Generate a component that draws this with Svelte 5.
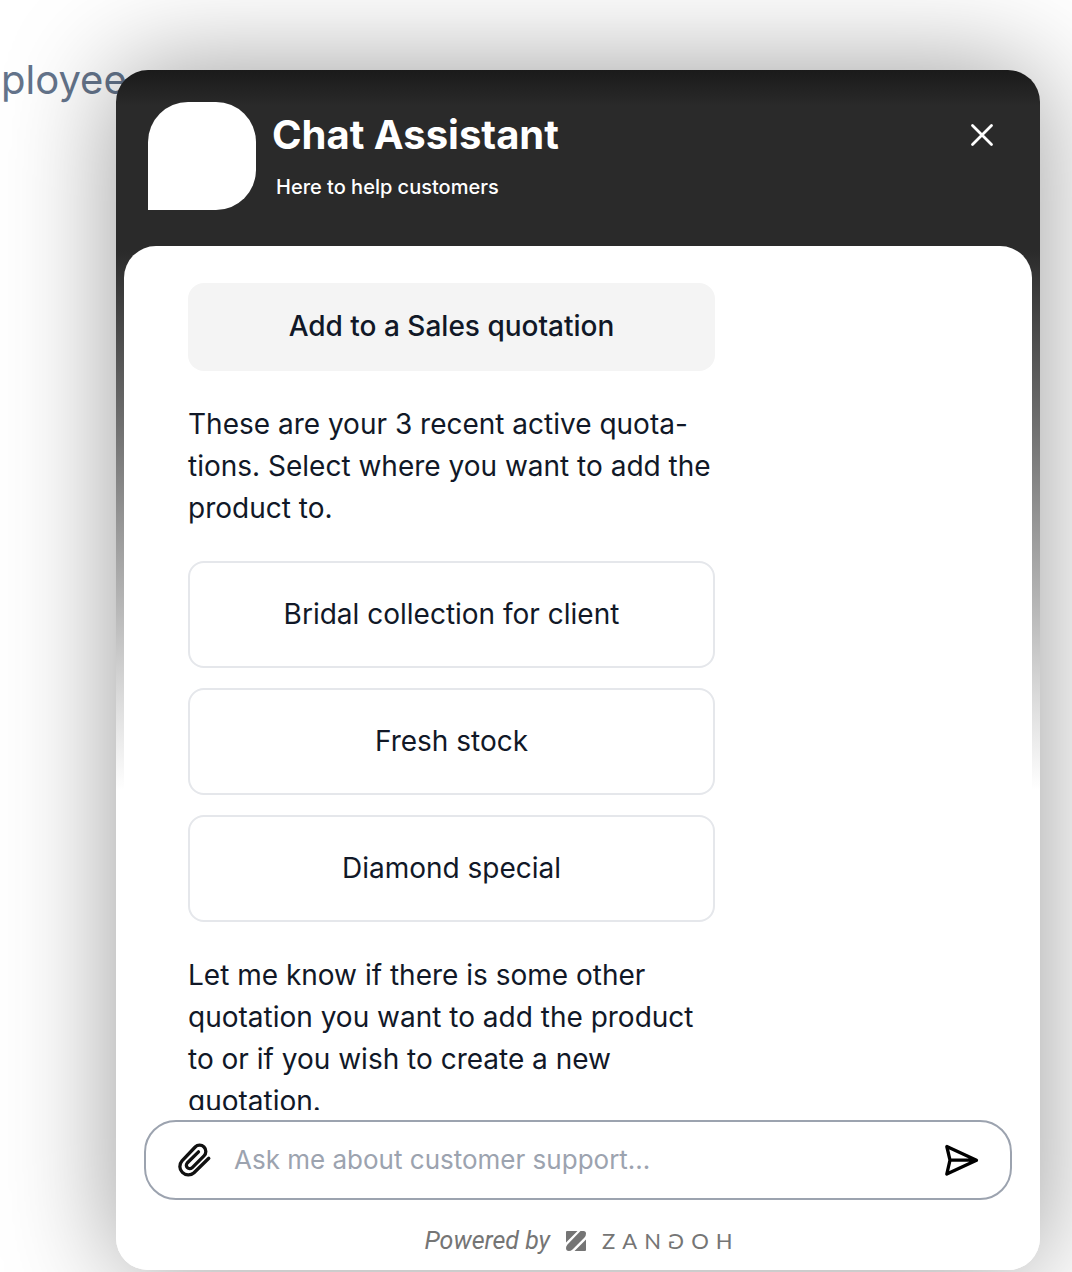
<script>
  const options = ['Bridal collection for client', 'Fresh stock', 'Diamond special'];
  let draft = $state('');
</script>

<main class="page">
  <p class="backdrop">ployee</p>

  <section class="chat" aria-label="Chat Assistant">
    <header>
      <div class="avatar"></div>
      <div class="titles">
        <h1>Chat Assistant</h1>
        <p>Here to help customers</p>
      </div>
      <button class="icon close" aria-label="Close chat">
        <svg width="24" height="24" viewBox="0 0 24 24"><path d="M2.5 2.5l19 19M21.5 2.5l-19 19" fill="none" stroke="#fff" stroke-width="2.8" stroke-linecap="round" /></svg>
      </button>
    </header>

    <div class="body">
      <div class="messages">
        <div class="column">
          <button class="chosen">Add to a Sales quotation</button>
          <p class="text">These are your 3 recent active quota-<br />tions. Select where you want to add the product to.</p>
          <div class="options">
            {#each options as option}
              <button class="option">{option}</button>
            {/each}
          </div>
          <p class="text">Let me know if there is some other quotation you want to add the product to or if you wish to create a new quotation.</p>
        </div>
      </div>

      <form class="composer" onsubmit={(e) => e.preventDefault()}>
        <button type="button" class="icon" aria-label="Attach a file">
          <svg width="36" height="36" viewBox="0 0 36 36"><path d="M32.800 16.300L18 30.800A8.500 8.500 0 0 1 6 18.800L19.200 5A6.200 6.200 0 0 1 28 13.800L16 25.800A3.400 3.400 0 0 1 11.200 21L22.500 9.800" fill="none" stroke="#111" stroke-width="3.300" stroke-linecap="round" stroke-linejoin="round" /></svg>
        </button>
        <input type="text" aria-label="Message" placeholder="Ask me about customer support..." bind:value={draft} />
        <button type="submit" class="icon" aria-label="Send message">
          <svg width="36" height="36" viewBox="0 0 36 36"><path d="M2.800 4.500L32.500 18.200L2.800 32L6 18.200ZM6 18.200H32" fill="none" stroke="#000" stroke-width="3.300" stroke-linecap="round" stroke-linejoin="round" /></svg>
        </button>
      </form>

      <footer>
        <span class="powered">Powered by</span>
        <svg width="20" height="20" viewBox="0 0 20 20" fill="#757575"><path d="M1 0H11.500L0 11.500V1Q0 0 1 0ZM14.500 0H17.500Q20 0 20 2.500Q20 5 18.500 6.500L6.500 18.500Q5 20 2.800 20Q0 20 0 17Q0 15 1.500 13.500ZM20 8.500V19Q20 20 19 20H8.500Z" /></svg>
        <span class="brand">ZAN<span class="mirror">G</span>OH</span>
      </footer>
    </div>
  </section>
</main>

<style>
  :global(body) {
    background: #fff;
  }
  .page {
    position: relative;
    box-sizing: border-box;
    min-height: 100vh;
    padding: 70px 32px 2px 116px;
    overflow: hidden;
    font-family: Inter, 'Liberation Sans', sans-serif;
    color: #111827;
  }
  h1,
  p {
    margin: 0;
  }
  button,
  input {
    font: inherit;
    color: inherit;
    border: 0;
    background: none;
    padding: 0;
  }
  button {
    cursor: pointer;
  }
  .backdrop {
    position: absolute;
    left: 1px;
    top: 56px;
    font-size: 40px;
    line-height: 48px;
    color: #64748b;
  }
  .chat {
    position: relative;
    box-sizing: border-box;
    height: calc(100vh - 72px);
    display: flex;
    flex-direction: column;
    border-radius: 32px;
    background: linear-gradient(#1a1a1a 0, #2a2a2a 3%, #2a2a2a 15%, #fff 60%);
    box-shadow: 0 0 112px rgba(0, 0, 0, 0.4);
  }
  header {
    display: flex;
    align-items: flex-start;
    gap: 16px;
    padding: 32px 40px 36px 32px;
    color: #fff;
  }
  .avatar {
    width: 108px;
    height: 108px;
    border-radius: 40px 40px 40px 0;
    background: #fff;
  }
  .titles {
    flex: 1;
    padding-top: 8px;
  }
  h1 {
    font-size: 40px;
    line-height: 50px;
    font-weight: 700;
  }
  .titles p {
    padding: 12px 4px 0;
    font-size: 20px;
    line-height: 30px;
    font-weight: 500;
  }
  .icon {
    display: grid;
    place-items: center;
    width: 36px;
    height: 36px;
    flex: none;
  }
  .close {
    margin-top: 15px;
  }
  .body {
    flex: 1;
    min-height: 0;
    display: flex;
    flex-direction: column;
    margin: 0 8px;
    border-radius: 32px;
    background: #fff;
  }
  .messages {
    flex: 1;
    min-height: 0;
    overflow: hidden;
    padding: 37px 0 0 64px;
  }
  .column {
    width: 527px;
    max-width: 100%;
    font-size: 28px;
    line-height: 42px;
  }
  .chosen {
    width: 100%;
    padding: 22px 16px 24px;
    border-radius: 16px;
    background: #f4f4f4;
    font-weight: 500;
  }
  .text {
    padding: 32px 0;
  }
  .options {
    display: grid;
    gap: 20px;
  }
  .option {
    padding: 30px 16px 31px;
    border: 2px solid #e5e7eb;
    border-radius: 16px;
  }
  .composer {
    display: flex;
    align-items: center;
    gap: 22px;
    margin: 10px 20px 0;
    padding: 20px 30px;
    border: 2px solid #9ca3af;
    border-radius: 32px;
  }
  input {
    flex: 1;
    min-width: 0;
    height: 36px;
    padding-bottom: 2px;
    box-sizing: border-box;
    font-size: 26px;
    outline: 0;
  }
  input::placeholder {
    color: #9ca3af;
    opacity: 1;
  }
  footer {
    display: flex;
    align-items: center;
    justify-content: center;
    gap: 16px;
    padding: 26px 0 14px 8px;
    color: #757575;
    line-height: 30px;
  }
  .powered {
    font: italic 25px/30px Roboto, sans-serif;
  }
  .brand {
    font: 400 22px/30px Lato, sans-serif;
    letter-spacing: 7px;
  }
  .mirror {
    display: inline-block;
    margin-right: 7px;
    letter-spacing: 0;
    transform: scaleX(-1);
  }
</style>
